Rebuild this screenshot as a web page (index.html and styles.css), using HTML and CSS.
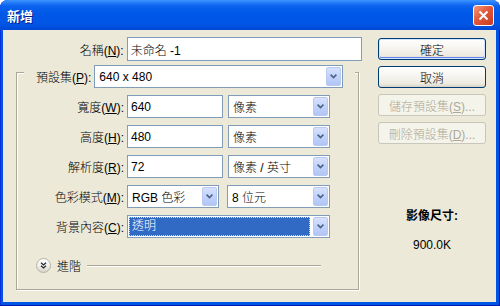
FILE: index.html
```html
<!doctype html>
<html>

<head>
    <title>新增</title>
    <link rel="stylesheet" href="styles.css">
</head>

<body>
    <div class="window">
        <div class="titlebar">
            <span class="title">新增</span>
            <span class="close">
                <svg width="11" height="11" viewBox="0 0 11 11"><path d="M1.5 1.5 L9.5 9.5 M9.5 1.5 L1.5 9.5" stroke="#fff" stroke-width="2" fill="none"/></svg>
            </span>
        </div>
        <div class="client">
            <div class="main">
                <div class="row name-row">
                    <label class="lbl">名稱(<u>N</u>):</label>
                    <input class="field name" type="text" value="未命名 -1">
                </div>
                <div class="group">
                    <div class="legend">
                        <label class="lbl preset-lbl">預設集(<u>P</u>):</label>
                        <div class="select preset"><span class="val">640 x 480</span><span class="arrow"><svg width="7" height="5" viewBox="0 0 7 5"><path d="M0.6 0.6 L3.5 3.6 L6.4 0.6" stroke="#4d6185" stroke-width="1.6" fill="none"/></svg></span></div>
                    </div>
                    <div class="row">
                        <label class="lbl">寬度(<u>W</u>):</label>
                        <input class="field num" type="text" value="640">
                        <div class="select unit"><span class="val">像素</span><span class="arrow"><svg width="7" height="5" viewBox="0 0 7 5"><path d="M0.6 0.6 L3.5 3.6 L6.4 0.6" stroke="#4d6185" stroke-width="1.6" fill="none"/></svg></span></div>
                    </div>
                    <div class="row">
                        <label class="lbl">高度(<u>H</u>):</label>
                        <input class="field num" type="text" value="480">
                        <div class="select unit"><span class="val">像素</span><span class="arrow"><svg width="7" height="5" viewBox="0 0 7 5"><path d="M0.6 0.6 L3.5 3.6 L6.4 0.6" stroke="#4d6185" stroke-width="1.6" fill="none"/></svg></span></div>
                    </div>
                    <div class="row">
                        <label class="lbl">解析度(<u>R</u>):</label>
                        <input class="field num" type="text" value="72">
                        <div class="select unit"><span class="val">像素 / 英寸</span><span class="arrow"><svg width="7" height="5" viewBox="0 0 7 5"><path d="M0.6 0.6 L3.5 3.6 L6.4 0.6" stroke="#4d6185" stroke-width="1.6" fill="none"/></svg></span></div>
                    </div>
                    <div class="row">
                        <label class="lbl">色彩模式(<u>M</u>):</label>
                        <div class="select mode"><span class="val">RGB 色彩</span><span class="arrow"><svg width="7" height="5" viewBox="0 0 7 5"><path d="M0.6 0.6 L3.5 3.6 L6.4 0.6" stroke="#4d6185" stroke-width="1.6" fill="none"/></svg></span></div>
                        <div class="select depth"><span class="val">8 位元</span><span class="arrow"><svg width="7" height="5" viewBox="0 0 7 5"><path d="M0.6 0.6 L3.5 3.6 L6.4 0.6" stroke="#4d6185" stroke-width="1.6" fill="none"/></svg></span></div>
                    </div>
                    <div class="row">
                        <label class="lbl">背景內容(<u>C</u>):</label>
                        <div class="select bg focused"><span class="val">透明</span><span class="arrow"><svg width="7" height="5" viewBox="0 0 7 5"><path d="M0.6 0.6 L3.5 3.6 L6.4 0.6" stroke="#4d6185" stroke-width="1.6" fill="none"/></svg></span></div>
                    </div>
                    <div class="adv">
                        <span class="adv-btn"><svg width="7" height="7" viewBox="0 0 7 7"><path d="M1 0.8 L3.5 2.9 L6 0.8 M1 3.8 L3.5 5.9 L6 3.8" stroke="#1e2a3a" stroke-width="1.3" fill="none"/></svg></span>
                        <span class="adv-text">進階</span>
                        <span class="adv-line"></span>
                    </div>
                </div>
            </div>
            <div class="side">
                <button class="btn default">確定</button>
                <button class="btn">取消</button>
                <button class="btn" disabled>儲存預設集(<u>S</u>)...</button>
                <button class="btn" disabled>刪除預設集(<u>D</u>)...</button>
                <div class="info">
                    <div class="info-title">影像尺寸:</div>
                    <div class="info-value">900.0K</div>
                </div>
            </div>
        </div>
    </div>
</body>

</html>
```

FILE: styles.css
```css
body {
    margin: 0;
    font-family: "Liberation Sans", "Noto Sans CJK TC", sans-serif;
    font-size: 12px;
    font-weight: 300;
    color: #000;
    background: #fff;
}

.window {
    width: 500px;
    height: 306px;
    box-sizing: border-box;
    background: #0055e5;
    border-radius: 8px 8px 0 0;
    box-shadow: inset -1px -1px 0 #0019b0, inset 1px 0 0 #0831d9;
    display: flex;
    flex-direction: column;
}

.titlebar {
    height: 30px;
    flex: none;
    display: flex;
    align-items: center;
    border-radius: 8px 8px 0 0;
    background: linear-gradient(to bottom, #3d95ff 0, #2a82fb 2px, #0a62ee 6px, #0058e8 45%, #0055e5 80%, #0048d6 100%);
}

.title {
    margin-left: 7px;
    color: #fff;
    font-size: 13px;
    font-weight: bold;
    text-shadow: 1px 1px 0 #0a1883;
}

.close {
    margin-left: auto;
    margin-right: 6px;
    width: 21px;
    height: 21px;
    box-sizing: border-box;
    border: 1px solid #fff;
    border-radius: 3px;
    background: linear-gradient(135deg, #f29a7c 0, #e2583a 45%, #c83b1e 100%);
    display: flex;
    align-items: center;
    justify-content: center;
}

.client {
    flex: 1;
    margin: 0 4px 4px 3px;
    background: #ece9d8;
    display: flex;
    padding-top: 7px;
}

.main {
    width: 359px;
}

.row {
    display: flex;
    align-items: center;
    height: 23px;
    margin-top: 7px;
}

.lbl {
    text-align: right;
    white-space: nowrap;
    width: 107px;
    margin-right: 3px;
}

.name-row {
    margin-top: 0;
    height: 24px;
}

.name-row .lbl {
    width: 121px;
}

.field {
    height: 23px;
    box-sizing: border-box;
    border: 1px solid #7f9db9;
    background: #fff;
    padding: 0 3px;
    margin: 0;
    font: inherit;
    color: #000;
}

.field.name {
    width: 236px;
    height: 24px;
}

.field.num {
    width: 96px;
}

.group {
    margin: 11px 0 0 13px;
    width: 343px;
    height: 218px;
    box-sizing: border-box;
    border: 1px solid #aca899;
    box-shadow: 1px 1px 0 #fff, inset 1px 1px 0 #fff;
}

.legend {
    display: flex;
    align-items: center;
    margin: -8px 0 0 7px;
    width: 331px;
    height: 23px;
    box-sizing: border-box;
    padding-left: 12px;
    background: #ece9d8;
}

.legend .lbl {
    width: auto;
    margin-right: 3px;
}

.select {
    display: flex;
    align-items: center;
    height: 23px;
    box-sizing: border-box;
    border: 1px solid #7f9db9;
    background: #fff;
    padding: 1px;
}

.select .val {
    flex: 1;
    padding-left: 3px;
    white-space: nowrap;
}

.arrow {
    width: 15px;
    height: 19px;
    box-sizing: border-box;
    border: 1px solid #b9c9ef;
    border-radius: 2px;
    background: linear-gradient(to bottom, #d6e1fd 0, #c2d3fb 50%, #b1c6f6 100%);
    display: flex;
    align-items: center;
    justify-content: center;
}

.select.preset {
    width: 249px;
}

.select.unit {
    width: 102px;
    margin-left: 5px;
}

.select.mode {
    width: 92px;
}

.select.depth {
    width: 103px;
    margin-left: 8px;
}

.select.bg {
    width: 203px;
}

.select.focused .val {
    background: #316ac5;
    color: #fff;
    height: 19px;
    line-height: 19px;
    margin-right: 3px;
    outline: 1px dotted #c9d8f2;
    outline-offset: -1px;
}

.adv {
    display: flex;
    align-items: center;
    height: 16px;
    margin: 19px 37px 0 19px;
}

.adv-btn {
    width: 15px;
    height: 15px;
    box-sizing: border-box;
    border: 1px solid #b5b3a6;
    border-radius: 50%;
    background: linear-gradient(to bottom, #ffffff 0, #f2f1ea 50%, #d8d5c8 100%);
    display: flex;
    align-items: center;
    justify-content: center;
}

.adv-text {
    margin: 0 6px;
}

.adv-line {
    flex: 1;
    height: 1px;
    background: #aca899;
    box-shadow: 0 1px 0 #fff;
}

.side {
    width: 108px;
    margin-left: 16px;
    padding-top: 1px;
    display: flex;
    flex-direction: column;
    gap: 6px;
}

.btn {
    height: 22px;
    box-sizing: border-box;
    border: 1px solid #003c74;
    border-radius: 3px;
    background: linear-gradient(to bottom, #ffffff 0, #f7f6f1 40%, #ece9df 85%, #d6d0c5 100%);
    font: inherit;
    color: #000;
    padding: 0;
    white-space: nowrap;
}

.btn.default {
    box-shadow: inset 0 0 0 1px #cee7ff, inset 0 -1px 0 1px #6982ee;
}

.btn:disabled {
    border-color: #c9c7ba;
    background: #f5f4ea;
    color: #aca899;
}

.info {
    margin-top: 59px;
    text-align: center;
    line-height: 15px;
}

.info-title {
    font-weight: bold;
}

.info-value {
    margin-top: 14px;
}
```
